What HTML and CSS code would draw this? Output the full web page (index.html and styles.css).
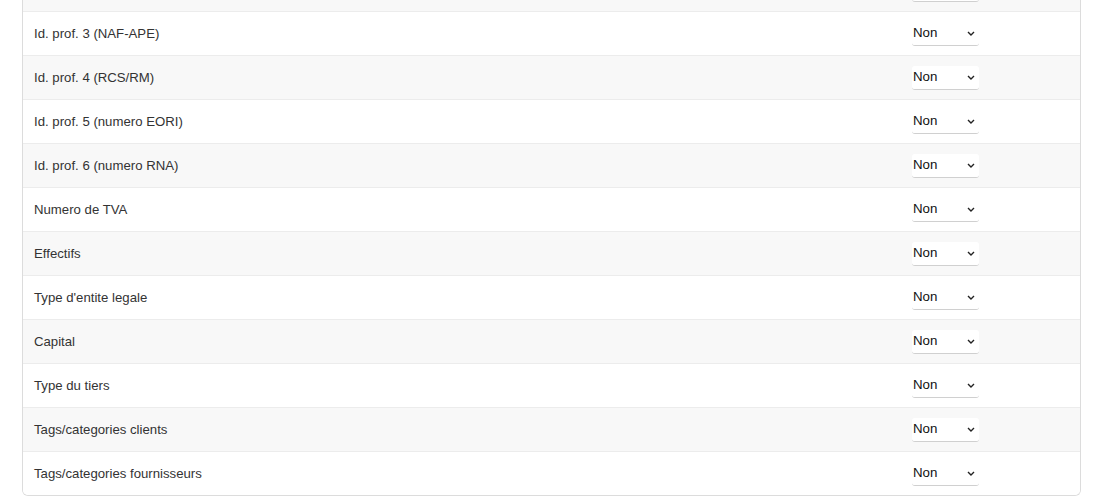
FILE: index.html
```html
<!DOCTYPE html>
<html lang="fr">
<head>
<meta charset="utf-8">
<title>Champs</title>
<link rel="stylesheet" href="styles.css">
</head>
<body>
<div class="panel">
  <div class="row odd"><div class="label"></div><div class="cell"><div class="select"></div></div></div>
  <div class="row"><div class="label">Id. prof. 3 (NAF-APE)</div><div class="cell"><div class="select"><span>Non</span><svg class="chev" width="8" height="5" viewBox="0 0 8 5"><path d="M1 1 L4 4 L7 1" fill="none" stroke="#222" stroke-width="1.4"/></svg></div></div></div>
  <div class="row odd"><div class="label">Id. prof. 4 (RCS/RM)</div><div class="cell"><div class="select"><span>Non</span><svg class="chev" width="8" height="5" viewBox="0 0 8 5"><path d="M1 1 L4 4 L7 1" fill="none" stroke="#222" stroke-width="1.4"/></svg></div></div></div>
  <div class="row"><div class="label">Id. prof. 5 (numero EORI)</div><div class="cell"><div class="select"><span>Non</span><svg class="chev" width="8" height="5" viewBox="0 0 8 5"><path d="M1 1 L4 4 L7 1" fill="none" stroke="#222" stroke-width="1.4"/></svg></div></div></div>
  <div class="row odd"><div class="label">Id. prof. 6 (numero RNA)</div><div class="cell"><div class="select"><span>Non</span><svg class="chev" width="8" height="5" viewBox="0 0 8 5"><path d="M1 1 L4 4 L7 1" fill="none" stroke="#222" stroke-width="1.4"/></svg></div></div></div>
  <div class="row"><div class="label">Numero de TVA</div><div class="cell"><div class="select"><span>Non</span><svg class="chev" width="8" height="5" viewBox="0 0 8 5"><path d="M1 1 L4 4 L7 1" fill="none" stroke="#222" stroke-width="1.4"/></svg></div></div></div>
  <div class="row odd"><div class="label">Effectifs</div><div class="cell"><div class="select"><span>Non</span><svg class="chev" width="8" height="5" viewBox="0 0 8 5"><path d="M1 1 L4 4 L7 1" fill="none" stroke="#222" stroke-width="1.4"/></svg></div></div></div>
  <div class="row"><div class="label">Type d'entite legale</div><div class="cell"><div class="select"><span>Non</span><svg class="chev" width="8" height="5" viewBox="0 0 8 5"><path d="M1 1 L4 4 L7 1" fill="none" stroke="#222" stroke-width="1.4"/></svg></div></div></div>
  <div class="row odd"><div class="label">Capital</div><div class="cell"><div class="select"><span>Non</span><svg class="chev" width="8" height="5" viewBox="0 0 8 5"><path d="M1 1 L4 4 L7 1" fill="none" stroke="#222" stroke-width="1.4"/></svg></div></div></div>
  <div class="row"><div class="label">Type du tiers</div><div class="cell"><div class="select"><span>Non</span><svg class="chev" width="8" height="5" viewBox="0 0 8 5"><path d="M1 1 L4 4 L7 1" fill="none" stroke="#222" stroke-width="1.4"/></svg></div></div></div>
  <div class="row odd"><div class="label">Tags/categories clients</div><div class="cell"><div class="select"><span>Non</span><svg class="chev" width="8" height="5" viewBox="0 0 8 5"><path d="M1 1 L4 4 L7 1" fill="none" stroke="#222" stroke-width="1.4"/></svg></div></div></div>
  <div class="row last"><div class="label">Tags/categories fournisseurs</div><div class="cell"><div class="select"><span>Non</span><svg class="chev" width="8" height="5" viewBox="0 0 8 5"><path d="M1 1 L4 4 L7 1" fill="none" stroke="#222" stroke-width="1.4"/></svg></div></div></div>
</div>
</body>
</html>
```

FILE: styles.css
```css
html, body {
  margin: 0;
  padding: 0;
  background: #fff;
  overflow: hidden;
}
body {
  font-family: "Liberation Sans", Arial, sans-serif;
  font-size: 13.2px;
  color: #333;
}
.panel {
  margin: -32px 0 0 22px;
  width: 1057px;
  border: 1px solid #dcdcdc;
  border-top: none;
  border-radius: 0 0 6px 6px;
  overflow: hidden;
}
.row {
  display: grid;
  grid-template-columns: 889px 1fr;
  align-items: center;
  height: 43px;
  border-bottom: 1px solid #ececec;
  background: #fff;
}
.row.odd {
  background: #f8f8f8;
}
.row.last {
  border-bottom: none;
}
.label {
  padding-left: 11px;
  white-space: nowrap;
}
.cell {
  display: flex;
  align-items: center;
}
.select {
  box-sizing: border-box;
  width: 67px;
  height: 24px;
  display: flex;
  align-items: center;
  justify-content: space-between;
  padding: 0 4px 2px 1px;
  background: #fff;
  border-bottom: 1px solid #d0d0d0;
  border-radius: 3px;
  color: #111;
  font-size: 13.3px;
}
.chev {
  display: block;
  margin-top: 2px;
}
```
